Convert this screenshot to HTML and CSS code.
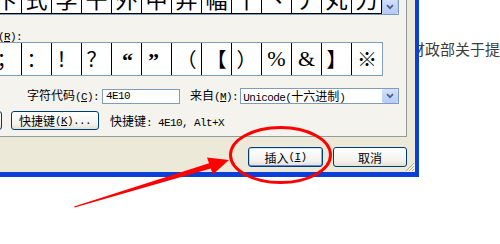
FILE: index.html
```html
<!DOCTYPE html>
<html>
<head>
  <meta charset="utf-8">
  <title>符号</title>
  <meta name="viewport" content="width=device-width, initial-scale=1.0">
  <link rel="stylesheet" href="styles.css">
</head>
<body>
  <div class="screen">
    <div class="dialog">
      <div class="tabpage">
        <div class="grid grid-all">
          <div class="cells">
            <span class="cell">卞</span>
            <span class="cell">式</span>
            <span class="cell">孚</span>
            <span class="cell">干</span>
            <span class="cell">外</span>
            <span class="cell">中</span>
            <span class="cell">弃</span>
            <span class="cell">幅</span>
            <span class="cell">十</span>
            <span class="cell">丶</span>
            <span class="cell">丿</span>
            <span class="cell">丸</span>
            <span class="cell">刀</span>
          </div>
          <div class="scrollbar">
            <span class="scroll-down">
              <svg width="8" height="6" viewBox="0 0 8 6"><path d="M1 1.2 L4 4.2 L7 1.2" fill="none" stroke="#4d6185" stroke-width="1.8"/></svg>
            </span>
          </div>
        </div>

        <div class="recent-label"><span class="ms">(<u>R</u>):</span></div>

        <div class="grid grid-recent">
          <span class="cell">；</span>
          <span class="cell">：</span>
          <span class="cell">！</span>
          <span class="cell">？</span>
          <span class="cell quote quote-open">“</span>
          <span class="cell quote quote-close">”</span>
          <span class="cell">（</span>
          <span class="cell">【</span>
          <span class="cell">）</span>
          <span class="cell serif">%</span>
          <span class="cell serif">&amp;</span>
          <span class="cell">】</span>
          <span class="cell">※</span>
        </div>

        <div class="code-row">
          <span class="field-label">字符代码<span class="ms">(<u>C</u>):</span></span>
          <span class="edit ms">4E10</span>
          <span class="field-label from-label">来自<span class="ms">(<u>M</u>):</span></span>
          <span class="combo">
            <span class="combo-text ms">Unicode(<span class="cjk">十六进制</span>)</span>
            <span class="combo-btn">
              <svg width="8" height="6" viewBox="0 0 8 6"><path d="M1 1.2 L4 4.2 L7 1.2" fill="none" stroke="#4d6185" stroke-width="1.8"/></svg>
            </span>
          </span>
        </div>

        <div class="key-row">
          <span class="btn btn-stub"></span>
          <span class="btn btn-key">快捷键<span class="ms">(<u>K</u>)...</span></span>
          <span class="key-info">快捷键<span class="ms">: 4E10, Alt+X</span></span>
        </div>
      </div>

      <div class="footer">
        <span class="btn btn-default">插入<span class="ms">(<u>I</u>)</span></span>
        <span class="btn btn-cancel">取消</span>
        <span class="grip">
          <svg width="10" height="10" viewBox="0 0 10 10">
            <path d="M9 1 L1 9 M9 4 L4 9 M9 7 L7 9" stroke="#aca899" stroke-width="1"/>
            <path d="M10 2 L2 10 M10 5 L5 10 M10 8 L8 10" stroke="#ffffff" stroke-width="1"/>
          </svg>
        </span>
      </div>
    </div>

    <div class="page-col">
      <div class="page-text">财政部关于提高</div>
    </div>
  </div>

  <svg class="markup" width="500" height="244" viewBox="0 0 500 244">
    <ellipse cx="280.5" cy="155" rx="50" ry="27.5" fill="none" stroke="#ff0000" stroke-width="3"/>
    <polygon points="74,206.5 209,163.2 207,157.5 229,160 212.8,174.5 210.8,168.4 74.6,207.6" fill="#ff0000"/>
  </svg>
</body>
</html>
```

FILE: styles.css
```css
body {
  margin: 0;
  width: 500px;
  height: 244px;
  overflow: hidden;
  position: relative;
  background-color: #ffffff;
  font-family: "Noto Sans CJK SC", sans-serif;
  font-size: 12px;
  color: #000000;
}

.screen {
  display: flex;
  align-items: flex-start;
}

/* dialog frame */
.dialog {
  flex: none;
  width: 419px;
  height: 177px;
  box-sizing: border-box;
  display: flex;
  flex-direction: column;
  background-color: #ece9d8;
  border-right: 4px solid #0b3fd8;
  border-bottom: 5px solid #0b3fd8;
}

.tabpage {
  width: 407px;
  height: 137px;
  box-sizing: border-box;
  display: flex;
  flex-direction: column;
  overflow: hidden;
  background-color: #f4f3ee;
  border-right: 1px solid #919b9c;
  border-bottom: 1px solid #919b9c;
}

.ms {
  font-family: "Liberation Mono", monospace;
  font-size: 11px;
  letter-spacing: -0.6px;
}

.ms .cjk {
  font-family: "Noto Sans CJK SC", sans-serif;
  font-size: 12px;
  letter-spacing: 0;
}

/* symbol grids */
.grid {
  display: flex;
  align-self: flex-start;
  margin-left: -9px;
  border: 1px solid #7f9db9;
  background-color: #ffffff;
}

.grid-all {
  margin-top: -19px;
}

.cells {
  display: flex;
}

.cell {
  width: 30px;
  height: 32px;
  box-sizing: border-box;
  display: flex;
  align-items: center;
  justify-content: center;
  border-right: 1px solid #000000;
  font-size: 20px;
  line-height: 1;
}

.grid-all .cell {
  border-bottom: 1px solid #000000;
  font-size: 22px;
}

.grid-recent .cell:last-child {
  border-right: none;
}

.serif {
  font-family: "Liberation Serif", serif;
  font-size: 22px;
}

.quote {
  font-family: "Liberation Serif", serif;
  font-weight: bold;
  font-size: 22px;
  align-items: flex-start;
  padding-top: 7px;
}

.quote-open {
  justify-content: flex-end;
  padding-right: 8px;
}

.quote-close {
  justify-content: flex-start;
  padding-left: 6px;
}

.scrollbar {
  width: 16px;
  display: flex;
  align-items: flex-end;
  background-color: #fbfbf8;
}

.scroll-down {
  width: 16px;
  height: 16px;
  box-sizing: border-box;
  display: flex;
  align-items: center;
  justify-content: center;
  padding-top: 2px;
  border: 1px solid #b5c8f3;
  border-radius: 2px;
  background: linear-gradient(#d4e0fd, #b6cbf7);
}

.recent-label {
  height: 27px;
  box-sizing: border-box;
  padding-top: 13px;
  margin-left: -2px;
  line-height: 13px;
}

/* code row */
.code-row {
  display: flex;
  align-items: center;
  height: 16px;
  margin-top: 12px;
  padding-left: 27px;
}

.field-label {
  white-space: nowrap;
  line-height: 16px;
}

.from-label {
  margin-left: 10px;
}

.edit {
  width: 78px;
  height: 15px;
  box-sizing: border-box;
  margin-left: 3px;
  padding-left: 3px;
  line-height: 13px;
  border: 1px solid #7f9db9;
  background-color: #ffffff;
}

.combo {
  width: 159px;
  height: 16px;
  box-sizing: border-box;
  margin-left: 2px;
  display: flex;
  border: 1px solid #7f9db9;
  background-color: #ffffff;
}

.combo-text {
  flex: 1;
  padding-left: 2px;
  line-height: 14px;
  white-space: nowrap;
}

.combo-btn {
  width: 16px;
  display: flex;
  align-items: center;
  justify-content: center;
  border-radius: 2px;
  background: linear-gradient(#d4e0fd, #b6cbf7);
}

/* buttons */
.key-row {
  display: flex;
  align-items: center;
  margin-top: 7px;
}

.btn {
  height: 19px;
  box-sizing: border-box;
  display: flex;
  align-items: center;
  justify-content: center;
  border: 1px solid #003c74;
  border-radius: 3px;
  background: linear-gradient(#ffffff, #f3f2ee 70%, #e3e0d5);
  white-space: nowrap;
}

.btn-stub {
  width: 30px;
  margin-left: -28px;
}

.btn-key {
  width: 88px;
  margin-left: 9px;
}

.key-info {
  margin-left: 11px;
  white-space: nowrap;
}

.footer {
  flex: 1;
  display: flex;
  justify-content: flex-end;
  align-items: flex-start;
  padding-top: 10px;
}

.footer .btn {
  height: 20px;
}

.btn-default {
  width: 75px;
  box-shadow: inset 0 1px 0 #cee7ff, inset 0 -1px 0 #6982ee, inset 1px 0 0 #b8d2f7, inset -1px 0 0 #8aa8f0;
}

.btn-cancel {
  width: 74px;
  margin-left: 10px;
  margin-right: -2px;
}

.grip {
  width: 10px;
  height: 10px;
  align-self: flex-end;
}

.grip svg {
  display: block;
}

/* page behind the dialog */
.page-col {
  flex: 1;
  min-width: 0;
  overflow: hidden;
}

.page-text {
  margin-top: 40px;
  margin-left: -9px;
  font-size: 15px;
  line-height: 17px;
  color: #3c3c3c;
  white-space: nowrap;
}

.markup {
  position: absolute;
  left: 0;
  top: 0;
  pointer-events: none;
}
```
